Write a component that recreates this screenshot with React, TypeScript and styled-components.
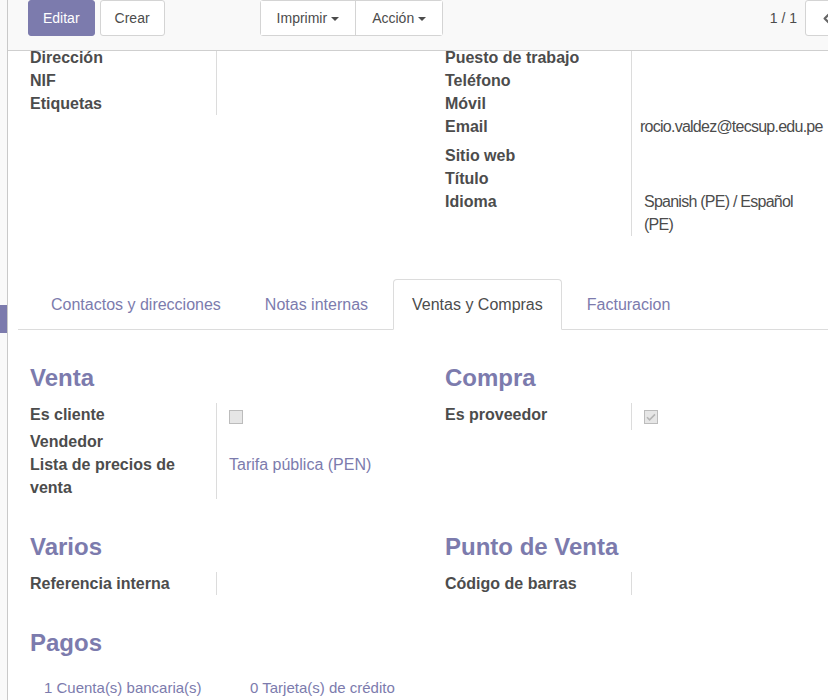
import { styled, createGlobalStyle } from "styled-components";
import { ChevronLeft } from "lucide-react";

const GlobalStyle = createGlobalStyle`
  body {
    margin: 0;
    font-family: "Liberation Sans", Arial, sans-serif;
    overflow: hidden;
    background: #fff;
  }
`;

const App = () => {
  return (
    <Shell>
      <GlobalStyle />
      <SideStrip>
        <SideMarker />
      </SideStrip>
      <Main>
        <ControlPanel>
          <PrimaryButton>Editar</PrimaryButton>
          <Button>Crear</Button>
          <ButtonGroup>
            <GroupButton>
              Imprimir <Caret />
            </GroupButton>
            <GroupButton>
              Acción <Caret />
            </GroupButton>
          </ButtonGroup>
          <Pager>
            <PagerValue>1 / 1</PagerValue>
            <PagerButtons>
              <PagerButton>
                <ChevronLeft size={15} strokeWidth={3.5} color="#666" />
              </PagerButton>
              <PagerButton />
            </PagerButtons>
          </Pager>
        </ControlPanel>

        <Sheet>
          <Scrolled>
            <TwoCols>
              <FieldGroup>
                <Label>Dirección</Label>
                <Value />
                <Label>NIF</Label>
                <Value />
                <Label>Etiquetas</Label>
                <Value />
              </FieldGroup>
              <FieldGroup>
                <Label>Puesto de trabajo</Label>
                <Value />
                <Label>Teléfono</Label>
                <Value />
                <Label>Móvil</Label>
                <Value />
                <Label $extra={6}>Email</Label>
                <Value $narrow $extra={6}>
                  rocio.valdez@tecsup.edu.pe
                </Value>
                <Label>Sitio web</Label>
                <Value />
                <Label>Título</Label>
                <Value />
                <Label>Idioma</Label>
                <Value $wrap>Spanish (PE) / Español (PE)</Value>
              </FieldGroup>
            </TwoCols>

            <Tabs>
              <Tab>Contactos y direcciones</Tab>
              <Tab>Notas internas</Tab>
              <Tab $active>Ventas y Compras</Tab>
              <Tab>Facturacion</Tab>
            </Tabs>

            <TwoCols>
              <Section>
                <Heading>Venta</Heading>
                <FieldGroup>
                  <Label $extra={4}>Es cliente</Label>
                  <Value $extra={4}>
                    <Checkbox />
                  </Value>
                  <Label>Vendedor</Label>
                  <Value />
                  <Label>Lista de precios de venta</Label>
                  <Value $link>Tarifa pública (PEN)</Value>
                </FieldGroup>
              </Section>
              <Section>
                <Heading>Compra</Heading>
                <FieldGroup>
                  <Label $extra={4}>Es proveedor</Label>
                  <Value $extra={4}>
                    <Checkbox>
                      <svg width="12" height="12" viewBox="0 0 12 12">
                        <path d="M2 6.2l2.6 2.6L10 3.4" fill="none" stroke="#b5b5b5" strokeWidth="1.6" />
                      </svg>
                    </Checkbox>
                  </Value>
                </FieldGroup>
              </Section>
            </TwoCols>

            <TwoCols>
              <Section>
                <Heading>Varios</Heading>
                <FieldGroup>
                  <Label>Referencia interna</Label>
                  <Value />
                </FieldGroup>
              </Section>
              <Section>
                <Heading>Punto de Venta</Heading>
                <FieldGroup>
                  <Label>Código de barras</Label>
                  <Value />
                </FieldGroup>
              </Section>
            </TwoCols>

            <Section>
              <Heading>Pagos</Heading>
              <PayRow>
                <PayButton>1 Cuenta(s) bancaria(s)</PayButton>
                <PayButton>0 Tarjeta(s) de crédito</PayButton>
              </PayRow>
            </Section>
          </Scrolled>
        </Sheet>
      </Main>
    </Shell>
  );
};

const Shell = styled.div`
  display: flex;
  width: 828px;
  height: 700px;
  overflow: hidden;
`;
const SideStrip = styled.div`
  width: 7px;
  flex-shrink: 0;
  background: #f9f9f9;
  border-right: 1px solid #c9c9c9;
`;
const SideMarker = styled.div`
  margin-top: 305px;
  height: 28px;
  background: #7c7bad;
`;
const Main = styled.div`
  flex: 1;
  min-width: 0;
  display: flex;
  flex-direction: column;
  overflow: hidden;
`;
const ControlPanel = styled.div`
  display: flex;
  align-items: flex-start;
  width: 889px;
  flex-shrink: 0;
  box-sizing: border-box;
  height: 51px;
  padding: 0 18px 0 20px;
  background: #f9f9f9;
  border-bottom: 1px solid #cfcfcf;
`;
const Button = styled.button`
  height: 36px;
  padding: 0 14px;
  margin-right: 5px;
  font-family: inherit;
  font-size: 14px;
  color: #4c4c4c;
  background: #fff;
  border: 1px solid #d4d4d4;
  border-radius: 3px;
  display: flex;
  align-items: center;
  gap: 4px;
`;
const PrimaryButton = styled(Button)`
  background: #7c7bad;
  border-color: #7c7bad;
  color: #fff;
`;
const ButtonGroup = styled.div`
  display: flex;
  margin-left: 90px;
  border: 1px solid #d4d4d4;
  border-radius: 3px;
  background: #fff;
`;
const GroupButton = styled(Button)`
  height: 34px;
  margin: 0;
  border: none;
  border-radius: 0;
  padding: 0 16px;
  & + & {
    border-left: 1px solid #d4d4d4;
  }
`;
const Caret = styled.span`
  width: 0;
  height: 0;
  border-left: 4px solid transparent;
  border-right: 4px solid transparent;
  border-top: 4px solid #4c4c4c;
  margin-top: 1px;
`;
const Pager = styled.div`
  margin-left: auto;
  display: flex;
  align-items: flex-start;
`;
const PagerValue = styled.div`
  font-size: 14px;
  line-height: 36px;
  color: #4c4c4c;
  margin-right: 8px;
`;
const PagerButtons = styled.div`
  display: flex;
  border: 1px solid #d4d4d4;
  border-radius: 3px;
  background: #fff;
`;
const PagerButton = styled.div`
  width: 36px;
  height: 34px;
  display: flex;
  align-items: center;
  padding-left: 13px;
  box-sizing: border-box;
  & + & {
    border-left: 1px solid #d4d4d4;
  }
`;
const Sheet = styled.div`
  flex: 1;
  overflow: hidden;
  padding-left: 22px;
  background: #fff;
`;
const Scrolled = styled.div`
  margin-top: -5px;
  width: 830px;
`;
const TwoCols = styled.div`
  display: grid;
  grid-template-columns: 415px 415px;
`;
const Section = styled.div`
  margin-top: 35px;
`;
const Heading = styled.div`
  font-size: 24px;
  font-weight: bold;
  line-height: 26px;
  color: #7c7bad;
  margin-bottom: 12px;
`;
const FieldGroup = styled.div`
  display: grid;
  grid-template-columns: 187px 1fr;
  align-content: start;
`;
const Label = styled.div<{ $extra?: number }>`
  font-size: 16px;
  font-weight: bold;
  line-height: 23px;
  color: #4c4c4c;
  border-right: 1px solid #dcdcdc;
  padding-right: 30px;
  padding-bottom: ${(p) => p.$extra ?? 0}px;
`;
const Value = styled.div<{ $extra?: number; $narrow?: boolean; $wrap?: boolean; $link?: boolean }>`
  font-size: 16px;
  line-height: 23px;
  color: ${(p) => (p.$link ? "#7c7bad" : "#4c4c4c")};
  padding-left: ${(p) => (p.$narrow ? 8 : 12)}px;
  padding-bottom: ${(p) => p.$extra ?? 0}px;
  letter-spacing: ${(p) => (p.$narrow || p.$wrap ? "-0.75px" : "0")};
  white-space: ${(p) => (p.$wrap ? "normal" : "nowrap")};
  max-width: ${(p) => (p.$wrap ? "160px" : "none")};
  display: flex;
  align-items: center;
  align-self: start;
  min-height: 23px;
`;
const Checkbox = styled.span`
  width: 14px;
  height: 14px;
  box-sizing: border-box;
  margin-top: 4px;
  background: #e6e6e6;
  border: 1px solid #bcbcbc;
  display: flex;
  align-items: center;
  justify-content: center;
`;
const Tabs = styled.div`
  display: flex;
  margin: 43px 0 0 -12px;
  padding-left: 14px;
  border-bottom: 1px solid #dcdcdc;
`;
const Tab = styled.div<{ $active?: boolean }>`
  height: 49px;
  line-height: 49px;
  padding: 0 18px;
  margin-bottom: ${(p) => (p.$active ? "-1px" : "0")};
  font-size: 16px;
  color: ${(p) => (p.$active ? "#4c4c4c" : "#7c7bad")};
  background: ${(p) => (p.$active ? "#fff" : "none")};
  border: ${(p) => (p.$active ? "1px solid #dcdcdc" : "none")};
  border-bottom-color: #fff;
  border-radius: 4px 4px 0 0;
  padding-top: ${(p) => (p.$active ? "0" : "1px")};
  margin-left: ${(p) => (p.$active ? "0" : "1px")};
  margin-right: ${(p) => (p.$active ? "6px" : "7px")};
`;
const PayRow = styled.div`
  display: flex;
  margin-top: 8px;
`;
const PayButton = styled.div`
  width: 206px;
  padding-left: 14px;
  height: 40px;
  line-height: 40px;
  font-size: 15px;
  color: #7c7bad;
  white-space: nowrap;
  box-sizing: border-box;
`;

export default App;
